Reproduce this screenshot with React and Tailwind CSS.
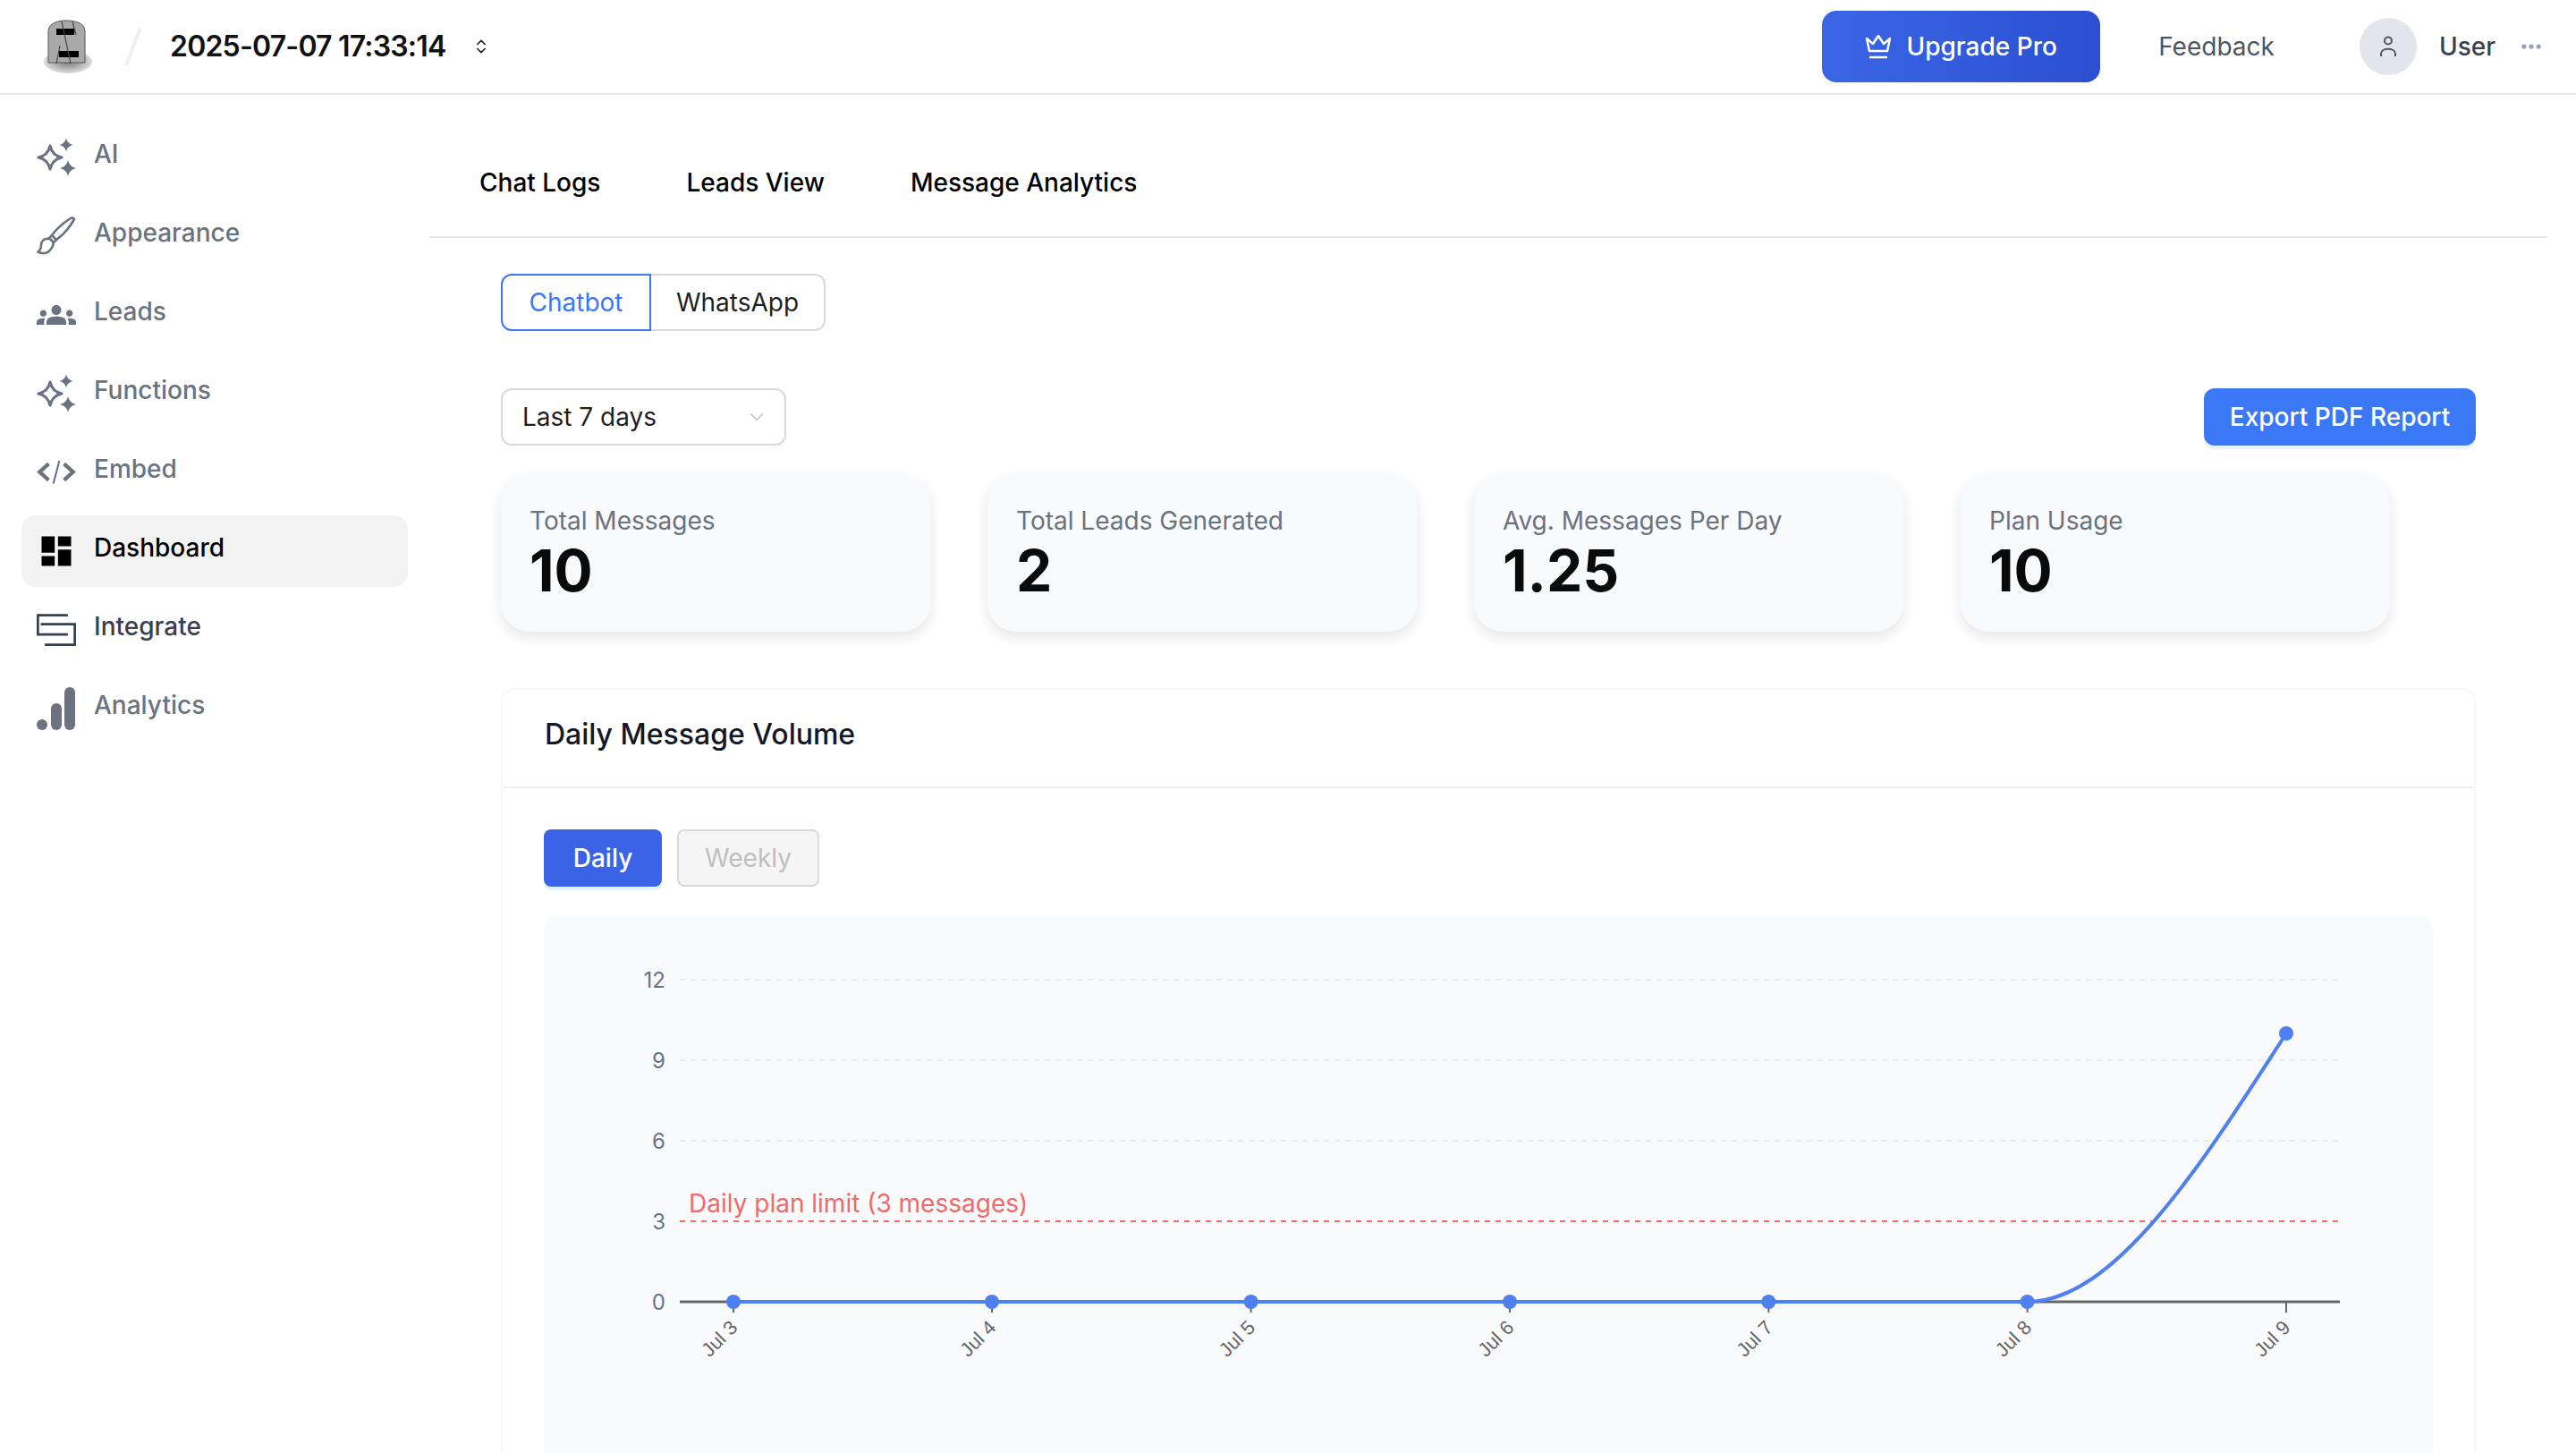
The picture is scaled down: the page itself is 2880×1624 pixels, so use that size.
import { ChevronsUpDown, ChevronDown, Ellipsis } from "lucide-react";
import { MdGroups, MdDashboard } from "react-icons/md";

const star = (c, d, r) =>
  `M${c} ${d - r}Q${c + r * 0.18} ${d - r * 0.18} ${c + r} ${d}Q${c + r * 0.18} ${d + r * 0.18} ${c} ${d + r}Q${c - r * 0.18} ${d + r * 0.18} ${c - r} ${d}Q${c - r * 0.18} ${d - r * 0.18} ${c} ${d - r}Z`;

const SparkIcon = () => (
  <svg width="44" height="44" viewBox="0 0 44 44" fill="#6b7280">
    <path d={star(15, 22, 13)} fill="none" stroke="#6b7280" strokeWidth="3.2" strokeLinejoin="round" />
    <path d={star(33, 8, 7.5)} />
    <path d={star(35, 34, 9)} />
  </svg>
);

const BrushIcon = () => (
  <svg width="44" height="44" viewBox="0 0 44 44" fill="none" stroke="#6b7280" strokeWidth="2.6" strokeLinejoin="round" strokeLinecap="round">
    <path d="M42 3C41.5 1 39 1 37 2.5C30 7 22 14 17 21L22 26C29 21 37 12 42 3Z" />
    <path d="M17 21L14 24L19 29L22 26" />
    <path d="M13.5 25C8 24 5 28 5 32C5 36 3.5 38 1.5 39.5C6 42 12 41.5 15 37.5C18 34 19 31.5 18.5 29" />
  </svg>
);

const CodeIcon = () => (
  <svg width="46" height="30" viewBox="0 0 46 30" fill="none" stroke="#6b7280">
    <path d="M14 5L3.5 14.5L14 24" strokeWidth="4.5" />
    <path d="M32 5L42.5 14.5L32 24" strokeWidth="4.5" />
    <path d="M26.5 1.5L19.5 28" strokeWidth="2.2" />
  </svg>
);

const IntegrateIcon = () => (
  <svg width="48" height="40" viewBox="0 0 48 40" fill="none" stroke="#374151" strokeWidth="3">
    <path d="M38 2H1.5V25.5H38" />
    <path d="M5 13H46.5V38H10" />
  </svg>
);

const BarsIcon = () => (
  <svg width="44" height="48" viewBox="0 0 44 48" fill="#6b7280">
    <circle cx="6" cy="42" r="6" />
    <rect x="16" y="18" width="12" height="30" rx="6" />
    <rect x="31" y="0" width="12" height="48" rx="6" />
  </svg>
);

const nav = [
  { label: "AI", icon: <SparkIcon />, cls: "text-[#6b7280]" },
  { label: "Appearance", icon: <BrushIcon />, cls: "text-[#6b7280]" },
  { label: "Leads", icon: <MdGroups size={44} color="#6b7280" />, cls: "text-[#6b7280]" },
  { label: "Functions", icon: <SparkIcon />, cls: "text-[#6b7280]" },
  { label: "Embed", icon: <CodeIcon />, cls: "text-[#6b7280]" },
  { label: "Dashboard", icon: <MdDashboard size={48} color="#000" />, cls: "text-black bg-[#f3f3f3]" },
  { label: "Integrate", icon: <IntegrateIcon />, cls: "text-[#374151]" },
  { label: "Analytics", icon: <BarsIcon />, cls: "text-[#6b7280]" },
];

const stats = [
  { label: "Total Messages", value: "10" },
  { label: "Total Leads Generated", value: "2" },
  { label: "Avg. Messages Per Day", value: "1.25" },
  { label: "Plan Usage", value: "10" },
];

const xs = [212, 501, 790.6, 1080, 1369.3, 1658.6, 1948];
const days = ["Jul 3", "Jul 4", "Jul 5", "Jul 6", "Jul 7", "Jul 8", "Jul 9"];
const y0 = 432;

const Chart = () => (
  <svg width="2080" height="700" viewBox="0 0 2080 700">
    {[342, 252, 162, 72].map((y, i) =>
      i === 0 ? null : <line key={y} x1="152" x2="2006" y1={y} y2={y} stroke="#e8eaed" strokeWidth="2" strokeDasharray="6 6" />
    )}
    {[
      ["12", 72],
      ["9", 162],
      ["6", 252],
      ["3", 342],
      ["0", 432],
    ].map(([t, y]) => (
      <text key={t} x="136" y={y + 9} textAnchor="end" fontSize="24" fill="#64748b" fontFamily="Inter, sans-serif">
        {t}
      </text>
    ))}
    <line x1="152" x2="2008" y1={y0} y2={y0} stroke="#666" strokeWidth="3" />
    {xs.map((x, i) => (
      <g key={days[i]}>
        <line x1={x} x2={x} y1={y0} y2={y0 + 12} stroke="#666" strokeWidth="2" />
        <text
          x={x + 6}
          y={y0 + 30}
          textAnchor="end"
          fontSize="22"
          fill="#666"
          fontFamily="'Liberation Sans', sans-serif"
          transform={`rotate(-45 ${x + 6} ${y0 + 30})`}
        >
          {days[i]}
        </text>
      </g>
    ))}
    <line x1="152" x2="2006" y1="342" y2="342" stroke="#ef6b6b" strokeWidth="2" strokeDasharray="6 6" />
    <text x="162" y="332" fontSize="28" fill="#ef6b6b" fontFamily="Inter, sans-serif">
      Daily plan limit (3 messages)
    </text>
    <path
      d={`M212 ${y0}H1658.6C1755.1 ${y0} 1851.5 282 1948 132`}
      fill="none"
      stroke="#4f80f0"
      strokeWidth="4"
    />
    {xs.map((x, i) => (
      <circle key={x} cx={x} cy={i === 6 ? 132 : y0} r="8" fill="#4f80f0" />
    ))}
  </svg>
);

export default function App() {
  return (
    <div className="h-[1624px] w-[2880px] overflow-hidden bg-white font-['Inter',sans-serif] text-[28px] leading-10 text-black">
      <header className="flex h-[106px] items-center justify-between border-b-2 border-[#e5e7eb] pl-[49px] pr-9">
        <div className="flex items-center">
          <svg width="54" height="62" viewBox="0 0 54 62">
            <defs>
              <radialGradient id="sh" cx="0.5" cy="0.5" r="0.5">
                <stop offset="0" stopColor="#777" />
                <stop offset="1" stopColor="#ddd" />
              </radialGradient>
            </defs>
            <ellipse cx="27" cy="48" rx="27" ry="13" fill="url(#sh)" />
            <path d="M5 49V14C5 6 14 2 24 2C34 2 46 4 46 14V49Z" fill="#a9a9a9" stroke="#555" strokeWidth="1" />
            <rect x="14" y="11" width="20" height="7" fill="#000" />
            <rect x="17" y="36" width="22" height="7" fill="#000" />
            <path d="M20 3L30 50M32 3L36 18M14 50L18 30" stroke="#444" strokeWidth="1.2" fill="none" />
          </svg>
          <svg width="20" height="44" viewBox="0 0 20 44" className="ml-9">
            <line x1="18" y1="1" x2="2" y2="43" stroke="#f0f0f0" strokeWidth="4" />
          </svg>
          <span className="ml-[31px] text-[32px] font-semibold tracking-tight text-[#111]">2025-07-07 17:33:14</span>
          <ChevronsUpDown size={20} className="ml-[30px] text-[#222]" strokeWidth={2} />
        </div>
        <div className="flex items-center">
          <button className="flex h-20 w-[311px] items-center justify-center gap-4 rounded-2xl bg-gradient-to-r from-[#3b66e6] to-[#2b4fd0] font-medium text-white">
            <svg width="30" height="28" viewBox="0 0 30 28" fill="none" stroke="#fff" strokeWidth="2.5" strokeLinejoin="round">
              <path d="M2 5L9 11L15 2L21 11L28 5L25 19H5Z" />
              <path d="M5 26H25" />
            </svg>
            Upgrade Pro
          </button>
          <span className="ml-[65px] text-[#4b5563]">Feedback</span>
          <div className="ml-[95px] flex h-16 w-16 items-center justify-center rounded-full bg-[#e2e6ec]">
            <svg width="20" height="24" viewBox="0 0 20 24" fill="none" stroke="#4b5563" strokeWidth="2">
              <circle cx="10" cy="5.5" r="4" />
              <path d="M2 23V20C2 13 18 13 18 20V23" />
            </svg>
          </div>
          <span className="ml-[25px] font-medium text-[#374151]">User</span>
          <Ellipsis size={28} className="ml-[26px] text-[#94a3b8]" strokeWidth={2.5} />
        </div>
      </header>

      <div className="flex">
        <aside className="flex w-[480px] shrink-0 flex-col gap-2 px-6 pt-[30px]">
          {nav.map((item) => (
            <div key={item.label} className={`flex h-20 items-center rounded-2xl pl-[17px] font-medium ${item.cls}`}>
              <div className="flex w-11 shrink-0 items-center justify-center">{item.icon}</div>
              <span className="mb-2 ml-5">{item.label}</span>
            </div>
          ))}
        </aside>

        <main className="mr-8 min-w-0 flex-1">
          <div className="flex h-[160px] items-start gap-24 border-b-2 border-[#e5e7eb] pl-14 pt-[78px] font-medium">
            <span>Chat Logs</span>
            <span>Leads View</span>
            <span>Message Analytics</span>
          </div>

          <div className="px-20">
            <div className="mt-10 flex h-16">
              <div className="flex w-[168px] items-center justify-center rounded-l-xl border-2 border-[#3b76f6] text-[#3b76f6]">Chatbot</div>
              <div className="flex w-[195px] items-center justify-center rounded-r-xl border-2 border-l-0 border-[#d9d9d9] text-[#1f1f1f]">WhatsApp</div>
            </div>

            <div className="mt-16 flex items-center justify-between">
              <div className="flex h-16 w-[319px] items-center justify-between rounded-xl border-2 border-[#d9d9d9] pl-[22px] pr-[18px] text-[#1f1f1f]">
                Last 7 days
                <ChevronDown size={26} strokeWidth={1.3} className="text-[#bfbfbf]" />
              </div>
              <button className="h-16 w-[304px] rounded-xl bg-[#3b78f6] font-medium text-white shadow-[0_4px_0_rgba(5,145,255,0.1)]">Export PDF Report</button>
            </div>

            <div className="mt-8 grid grid-cols-[repeat(4,480px)] gap-16">
              {stats.map((s) => (
                <div key={s.label} className="h-44 rounded-[32px] bg-[#f9fafb] p-8 shadow-[0_6px_16px_rgba(0,0,0,0.1)]">
                  <div className="text-[#6b7280]">{s.label}</div>
                  <div className="mt-1 text-[64px] font-bold leading-[64px] text-[#0a0a0a]">{s.value}</div>
                </div>
              ))}
            </div>

            <section className="mt-[63px] rounded-t-2xl border-2 border-[#f7f7f7]">
              <div className="flex h-[110px] items-center border-b-2 border-[#f0f0f0] px-[47px] pb-2 text-[32px] font-medium text-[#111827]">
                Daily Message Volume
              </div>
              <div className="px-[46px] pt-[46px]">
                <div className="flex gap-[17px]">
                  <button className="h-16 w-[132px] rounded-lg bg-[#3b63e6] font-medium text-white shadow-[0_4px_0_rgba(5,145,255,0.1)]">Daily</button>
                  <button className="h-16 w-[159px] rounded-lg border-2 border-[#d9d9d9] bg-[#f5f5f5] text-[#bfbfbf]">Weekly</button>
                </div>
                <div className="mt-8 h-[700px] rounded-2xl bg-[#f9fafb]">
                  <Chart />
                </div>
              </div>
            </section>
          </div>
        </main>
      </div>
    </div>
  );
}
